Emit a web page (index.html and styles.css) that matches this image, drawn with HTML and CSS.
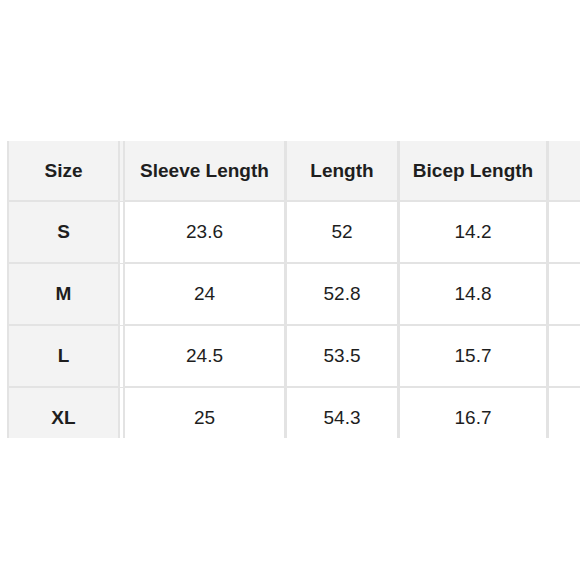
FILE: index.html
```html
<!DOCTYPE html>
<html>
<head>
<meta charset="utf-8">
<link rel="stylesheet" href="styles.css">
</head>
<body>
<div class="frame">
  <table class="size-table">
    <colgroup>
      <col class="c1"><col class="c2"><col class="c3"><col class="c4"><col class="c5">
    </colgroup>
    <thead>
      <tr>
        <th class="first">Size</th>
        <th>Sleeve Length</th>
        <th>Length</th>
        <th>Bicep Length</th>
        <th></th>
      </tr>
    </thead>
    <tbody>
      <tr><th class="first">S</th><td>23.6</td><td>52</td><td>14.2</td><td></td></tr>
      <tr><th class="first">M</th><td>24</td><td>52.8</td><td>14.8</td><td></td></tr>
      <tr><th class="first">L</th><td>24.5</td><td>53.5</td><td>15.7</td><td></td></tr>
      <tr><th class="first">XL</th><td>25</td><td>54.3</td><td>16.7</td><td></td></tr>
    </tbody>
  </table>
</div>
</body>
</html>
```

FILE: styles.css
```css
html, body {
  margin: 0;
  padding: 0;
  background: #ffffff;
  overflow: hidden;
}

.frame {
  width: 580px;
  height: 297px;
  margin-top: 141px;
  padding-left: 7px;
  box-sizing: border-box;
  overflow: hidden;
}

.size-table {
  border-collapse: separate;
  border-spacing: 0;
  table-layout: fixed;
  width: 646px;
  font-family: "Liberation Sans", Arial, sans-serif;
  font-size: 19px;
  color: #1e1e1e;
}

.c1 { width: 118px; }
.c2 { width: 162px; }
.c3 { width: 113px; }
.c4 { width: 149px; }
.c5 { width: 104px; }

.size-table th,
.size-table td {
  padding: 0;
  text-align: center;
  vertical-align: middle;
  border-right: 3px solid #e3e3e3;
  border-bottom: 2px solid #e3e3e3;
  height: 62px;
  box-sizing: border-box;
}

.size-table thead th {
  background: #f3f3f3;
  font-weight: bold;
  height: 61px;
}

.size-table tbody td {
  background: #ffffff;
  font-weight: normal;
}

.size-table th.first {
  border-left: 2px solid #e3e3e3;
  border-right: 7px double #e3e3e3;
  font-weight: bold;
  background: #f3f3f3;
}

.size-table tbody th.first {
  background-clip: padding-box;
}
```
